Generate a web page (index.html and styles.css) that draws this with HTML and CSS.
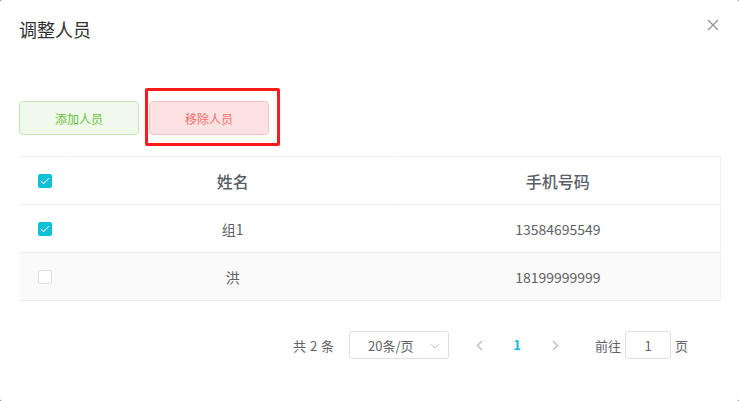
FILE: index.html
```html
<!DOCTYPE html>
<html>
<head>
	<title>调整人员</title>
	<meta charset="UTF-8">
	<link rel="stylesheet" href="styles.css">
</head>
<body>
	<div class="dialog">
		<div class="dialog-header">
			<span class="dialog-title">调整人员</span>
			<button class="dialog-close" type="button" aria-label="Close">
				<svg width="12" height="12" viewBox="0 0 12 12"><path d="M1 1L11 11M11 1L1 11" stroke="#909399" stroke-width="1.2" fill="none"/></svg>
			</button>
		</div>
		<div class="dialog-body">
			<div class="toolbar">
				<button class="btn btn-success" type="button">添加人员</button>
				<button class="btn btn-danger" type="button">移除人员</button>
				<div class="highlight"></div>
			</div>

			<table class="grid">
				<colgroup>
					<col class="col-check">
					<col class="col-name">
					<col class="col-phone">
				</colgroup>
				<thead>
					<tr>
						<th class="cell-check"><span class="checkbox checked"></span></th>
						<th>姓名</th>
						<th>手机号码</th>
					</tr>
				</thead>
				<tbody>
					<tr>
						<td class="cell-check"><span class="checkbox checked"></span></td>
						<td>组1</td>
						<td>13584695549</td>
					</tr>
					<tr class="striped">
						<td class="cell-check"><span class="checkbox"></span></td>
						<td>洪</td>
						<td>18199999999</td>
					</tr>
				</tbody>
			</table>

			<div class="pagination">
				<span class="total">共 2 条</span>
				<div class="sizes">
					<span>20条/页</span>
					<svg class="caret" width="10" height="6" viewBox="0 0 10 6"><path d="M1 1L5 5L9 1" stroke="#c0c4cc" stroke-width="1" fill="none"/></svg>
				</div>
				<button class="pg-btn" type="button">
					<svg width="7" height="11" viewBox="0 0 7 11"><path d="M6 1L1.5 5.5L6 10" stroke="#c0c4cc" stroke-width="1.6" fill="none"/></svg>
				</button>
				<span class="pager active">1</span>
				<button class="pg-btn" type="button">
					<svg width="7" height="11" viewBox="0 0 7 11"><path d="M1 1L5.5 5.5L1 10" stroke="#c0c4cc" stroke-width="1.6" fill="none"/></svg>
				</button>
				<span class="jumper">前往<input class="jump-input" type="text" value="1">页</span>
			</div>
		</div>
	</div>
</body>
</html>
```

FILE: styles.css
```css
html, body {
	margin: 0;
	padding: 0;
	background-color: #6b6b6b;
}

body {
	font-family: "Noto Sans CJK SC", "Noto Sans", sans-serif;
	color: #606266;
}

.dialog {
	box-sizing: border-box;
	width: 739px;
	height: 401px;
	background-color: #ffffff;
	border-radius: 2px;
	overflow: hidden;
}

.dialog-header {
	position: relative;
	padding: 17px 19px 0 19px;
	height: 24px;
}

.dialog-title {
	font-size: 18px;
	line-height: 24px;
	color: #303133;
}

.dialog-close {
	position: absolute;
	right: 20px;
	top: 19px;
	padding: 0;
	border: 0;
	background: none;
	width: 12px;
	height: 12px;
	cursor: pointer;
}

.dialog-close svg {
	display: block;
}

.dialog-body {
	padding: 60px 19px 0 19px;
}

.toolbar {
	position: relative;
	display: flex;
	gap: 10px;
	margin-bottom: 21px;
}

.btn {
	box-sizing: border-box;
	width: 120px;
	height: 34px;
	border-radius: 4px;
	font-family: inherit;
	font-size: 12px;
	cursor: pointer;
}

.btn-success {
	background-color: #f0f9eb;
	border: 1px solid #c2e7b0;
	color: #67c23a;
}

.btn-danger {
	background-color: #fde2e2;
	border: 1px solid #fbc4c4;
	color: #f56c6c;
}

.highlight {
	position: absolute;
	left: 126px;
	top: -13px;
	width: 129px;
	height: 52px;
	border: 3px solid #ff1a1a;
	border-radius: 2px;
}

.grid {
	width: 702px;
	border-collapse: collapse;
	table-layout: fixed;
	border-top: 1px solid #eef0f4;
	border-right: 1px solid #eef0f4;
}

.col-check {
	width: 51px;
}

.col-name, .col-phone {
	width: 325px;
}

.grid th, .grid td {
	height: 47px;
	padding: 0;
	text-align: center;
	border-bottom: 1px solid #ebeef5;
	border-right: 1px solid #fbfbfc;
}

.grid th:last-child, .grid td:last-child {
	border-right: 0;
}

.grid th {
	font-size: 16px;
	font-weight: 500;
	color: #5a5e66;
}

.grid td {
	font-size: 14px;
	color: #606266;
}

.grid tr.striped td {
	background-color: #fafafa;
}

.cell-check {
	text-align: left !important;
}

.checkbox {
	box-sizing: border-box;
	display: block;
	width: 14px;
	height: 14px;
	margin-left: 19px;
	border: 1px solid #dcdfe6;
	border-radius: 2px;
	background-color: #ffffff;
	position: relative;
}

.checkbox.checked {
	background-color: #0cc0d8;
	border-color: #0cc0d8;
}

.checkbox.checked::after {
	content: "";
	position: absolute;
	left: 4px;
	top: 1px;
	width: 3px;
	height: 7px;
	border: 1px solid #ffffff;
	border-left: 0;
	border-top: 0;
	transform: rotate(45deg);
}

.pagination {
	display: flex;
	align-items: center;
	padding-left: 274px;
	margin-top: 30px;
	height: 28px;
	font-size: 13px;
	color: #606266;
}

.total {
	margin-right: 15px;
	word-spacing: 1px;
}

.sizes {
	box-sizing: border-box;
	position: relative;
	width: 100px;
	height: 28px;
	border: 1px solid #dcdfe6;
	border-radius: 3px;
	display: flex;
	align-items: center;
	padding-left: 18px;
}

.caret {
	position: absolute;
	right: 8px;
	top: 11px;
}

.pg-btn {
	width: 30px;
	height: 28px;
	padding: 0;
	border: 0;
	background: none;
	display: flex;
	align-items: center;
	justify-content: center;
	margin-left: 15px;
}

.pager + .pg-btn {
	margin-left: 5px;
}

.pager {
	width: 36px;
	margin-left: 5px;
	text-align: center;
	font-weight: bold;
	line-height: 28px;
}

.pager.active {
	color: #0cc0d8;
}

.jumper {
	display: flex;
	align-items: center;
	margin-left: 25px;
}

.jump-input {
	box-sizing: border-box;
	width: 46px;
	height: 28px;
	margin: 0 4px;
	border: 1px solid #dcdfe6;
	border-radius: 3px;
	text-align: center;
	font-family: inherit;
	font-size: 13px;
	color: #606266;
	outline: none;
}
```
